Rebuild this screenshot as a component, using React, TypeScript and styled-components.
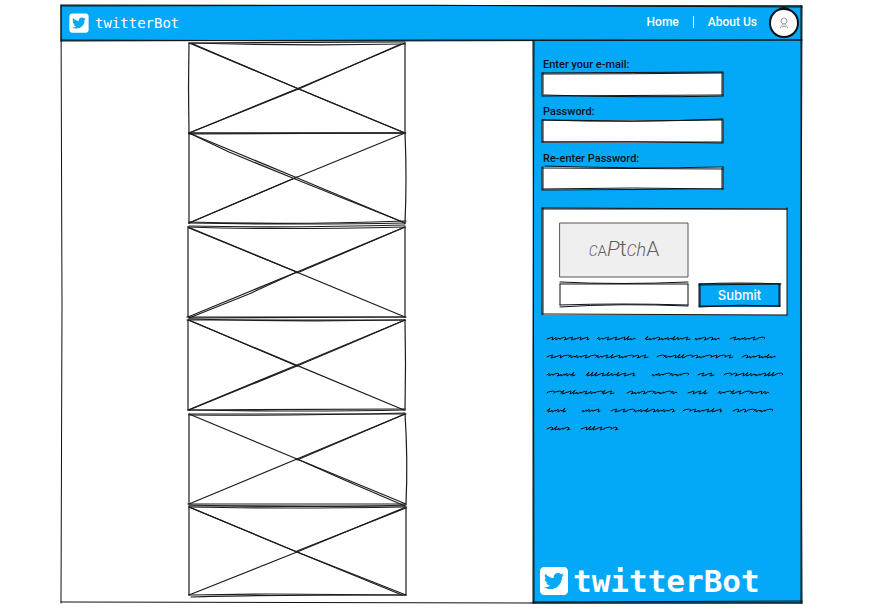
import React, { useId } from "react";
import styled, { createGlobalStyle } from "styled-components";
import { FaSquareTwitter } from "react-icons/fa6";

const BLUE = "#03a9f7";
const INK = "#0b1218";

const GlobalStyle = createGlobalStyle`
  *, *::before, *::after { box-sizing: border-box; }
  body { margin: 0; background: #fff; font-family: Roboto, "Liberation Sans", sans-serif; color: ${INK}; }
`;

/* ---------- hand-drawn outlines ---------- */

const Ink = styled.svg<{ $weight?: number; $color?: string }>`
  position: absolute;
  inset: 0;
  width: 100%;
  height: 100%;
  overflow: visible;
  pointer-events: none;
  fill: none;
  stroke: ${(p) => p.$color ?? INK};
  stroke-width: ${(p) => p.$weight ?? 1};
  stroke-linecap: round;

  path { vector-effect: non-scaling-stroke; }
`;

type SketchProps = { w: number; h: number; lines: string[]; weight?: number; color?: string };

function Sketch({ w, h, lines, weight, color }: SketchProps) {
  return (
    <Ink viewBox={`0 0 ${w} ${h}`} preserveAspectRatio="none" $weight={weight} $color={color} aria-hidden="true">
      {lines.map((d) => (
        <path key={d} d={d} />
      ))}
    </Ink>
  );
}

/* ---------- page frame ---------- */

const Page = styled.div`
  padding: 5px 87px 10px 61px;
`;

const Frame = styled.div`
  position: relative;
  display: flex;
  flex-direction: column;
  min-height: 598px;
`;

const Header = styled.header`
  position: relative;
  display: flex;
  align-items: center;
  justify-content: space-between;
  height: 36px;
  padding: 0 4px 0 8px;
  background: ${BLUE};
`;

const Body = styled.div`
  flex: 1;
  display: grid;
  grid-template-columns: minmax(0, 1fr) 269px;
`;

const Brand = styled.a<{ $large?: boolean }>`
  display: flex;
  align-items: center;
  gap: ${(p) => (p.$large ? 5 : 6)}px;
  color: #fff;
  text-decoration: none;
  font-family: "DejaVu Sans Mono", "Liberation Mono", monospace;
  font-size: ${(p) => (p.$large ? 31 : 14)}px;
  font-weight: ${(p) => (p.$large ? 700 : 400)};
  line-height: ${(p) => (p.$large ? 32 : 20)}px;

  svg {
    flex: none;
    width: ${(p) => (p.$large ? 28 : 20)}px;
    height: ${(p) => (p.$large ? 32 : 22)}px;
  }
`;

const Nav = styled.nav`
  display: flex;
  align-items: center;
  gap: 13px;
  color: #fff;
  font-size: 12px;
  font-weight: 500;
  line-height: 20px;
`;

const NavLink = styled.a`
  padding-bottom: 3px;
  color: inherit;
  text-decoration: none;
`;

const Divider = styled.span`
  width: 1px;
  height: 12px;
  margin: 0 1px 3px;
  background: #fff;
`;

const Avatar = styled.button`
  position: relative;
  display: grid;
  place-items: center;
  width: 28px;
  height: 28px;
  padding: 0;
  border: 0;
  border-radius: 50%;
  background: #fff;
`;

const Person = styled.svg`
  width: 10px;
  height: 12px;
  fill: none;
  stroke: #a0a0a0;
  stroke-width: 1;
`;

/* ---------- picture placeholders ---------- */

const Gallery = styled.main`
  display: flex;
  flex-direction: column;
  align-items: center;
  justify-content: space-between;
  padding: 2px 0 6px;
`;

const Pair = styled.div`
  display: flex;
  flex-direction: column;
  align-items: center;
  width: 100%;
`;

const Placeholder = styled.div`
  position: relative;
  width: 216px;
  max-width: 100%;
  height: 90px;
`;

const PLACEHOLDERS: string[][] = [
  [
    "M0 0Q110 3 216 1", "M3 0L216 -1", "M0 0Q-1 45 0 90", "M216 0V90", "M0 90H216",
    "M0 0L110 46L216 90", "M2 0Q108 46 216 90", "M0 90L110 45L216 0", "M0 90L112 45L212 1",
  ],
  [
    "M0 0H216", "M0 1L216 0", "M0 0V90", "M216 0Q218 45 216 90", "M0 90Q120 92 216 90", "M0 89Q100 92 217 88",
    "M0 0L106 44L216 90", "M0 0L40 19L106 46L216 90", "M0 90L106 45L216 0", "M0 90L108 44",
  ],
  [
    "M-1 0Q80 3 216 0", "M0 -1Q100 1 216 -2", "M-1 0V90", "M216 0V90", "M-2 90H216", "M0 91L217 90",
    "M-1 0L216 90", "M0 1L108 45", "M-1 90L108 45L216 0", "M0 91L60 67L108 45", "M108 46L216 0",
  ],
  [
    "M-2 0H216", "M0 -1Q100 2 216 0", "M-1 0V90", "M216 0Q217 45 216 90", "M-1 90L216 89", "M0 90Q120 92 216 90",
    "M-1 0L215 90", "M0 0L108 46", "M-1 90L108 45L216 0", "M0 90L108 46L160 24L216 0",
  ],
  [
    "M0 0H217", "M0 1Q100 2 216 -1", "M0 0V90", "M216 0Q219 45 217 90", "M-1 90H217", "M0 91Q130 94 217 91",
    "M0 0L108 45L217 90", "M108 45L160 68L216 92", "M0 90L216 0", "M108 46L216 0",
  ],
  [
    "M0 0Q90 2 217 0", "M0 -1H216", "M0 0V88", "M217 0V88", "M0 88L80 87L217 88", "M2 90Q60 88 216 88",
    "M0 0L108 45L217 88", "M0 0L108 45L213 88", "M0 88L108 45L217 0", "M108 44L217 1",
  ],
];

/* ---------- sign-up panel ---------- */

const Panel = styled.aside`
  position: relative;
  display: flex;
  flex-direction: column;
  padding: 16px 15px 6px 9px;
  background: ${BLUE};
`;

const Form = styled.form`
  display: flex;
  flex-direction: column;
  gap: 8px;
`;

const Field = styled.div`
  display: flex;
  flex-direction: column;
  width: 181px;
`;

const Label = styled.label`
  padding-left: 1px;
  font-size: 11px;
  font-weight: 500;
  line-height: 16px;
`;

const InputBox = styled.div`
  position: relative;
  height: 23px;
  background: #fff;
`;

const Input = styled.input`
  display: block;
  width: 100%;
  height: 100%;
  padding: 0 6px;
  border: 0;
  outline: 0;
  background: transparent;
  font: inherit;
  font-size: 12px;
`;

const CaptchaCard = styled.div`
  position: relative;
  display: grid;
  grid-template-columns: 128px 81px;
  column-gap: 11px;
  row-gap: 6px;
  margin-top: 10px;
  padding: 15px 7px 8px 18px;
  background: #fff;
`;

const CaptchaPicture = styled.div`
  grid-column: 1;
  position: relative;
  display: flex;
  align-items: baseline;
  justify-content: center;
  height: 54px;
  background: #efefef;
  color: #5f5f5f;
  font-family: Roboto, sans-serif;
  font-weight: 300;
  line-height: 52px;
`;

const Letter = styled.span<{ $size: number; $slant?: boolean }>`
  font-size: ${(p) => p.$size}px;
  font-style: ${(p) => (p.$slant ? "italic" : "normal")};
`;

const LETTERS: [string, number, boolean][] = [
  ["C", 14, true], ["A", 15, false], ["P", 21, true], ["t", 22, false],
  ["C", 16, true], ["h", 18, true], ["A", 21, false],
];

const CaptchaAnswer = styled(InputBox)`
  grid-column: 1;
`;

const Submit = styled.button`
  position: relative;
  grid-column: 2;
  height: 24px;
  padding: 0;
  border: 0;
  background: ${BLUE};
  color: #fff;
  font-family: Inter, sans-serif;
  font-size: 13px;
  font-weight: 500;
  line-height: 24px;
`;

const Scribbles = styled.svg`
  width: 240px;
  height: 108px;
  margin: 14px 0 0 5px;
  overflow: visible;
  fill: none;
  stroke: ${INK};
  stroke-width: 1;
  stroke-linecap: round;
  stroke-linejoin: round;
`;

const Footer = styled.footer`
  margin: auto 0 0 -2px;
`;

/* Each row lists the [start, end] of its scribbled words. */
const WORDS: [number, number][][] = [
  [[0, 41], [50, 90], [98, 140], [148, 175], [183, 220]],
  [[0, 102], [110, 187], [195, 228]],
  [[0, 31], [39, 92], [105, 143], [151, 170], [177, 233]],
  [[0, 67], [80, 132], [141, 163], [171, 225]],
  [[0, 22], [35, 56], [64, 128], [136, 178], [186, 224]],
  [[0, 27], [34, 75]],
];

/* Scribbled letters: each stroke with the width that it advances by. */
const STROKES: [string, number][] = [
  ["l3 -1l3 -1l-1 3l2 -1", 7],
  ["l1 -1l5 -1l2 1l-1 1", 7],
  ["l1 -1l0 2l4 -2l0 1", 5],
  ["l2 -2l0 3l3 -2l1 1", 6],
  ["l2 -1l3 -1l1 1l-2 2l3 -1", 7],
  ["l2 -1l4 -1l-2 3l4 -1", 8],
  ["l3 -3l-2 4l3 -1", 4],
];

function wordPath(x: number, end: number, y: number, seed: number) {
  let d = "";
  let at = x;
  let n = seed;
  while (at < end - 4) {
    const [stroke, advance] = STROKES[n % STROKES.length];
    d += `M${at} ${y}${stroke}`;
    n = (n * 5 + 3 + at) % 101;
    at += advance;
  }
  return d;
}

function TextField({ label, type, lines }: { label: string; type: string; lines: string[] }) {
  const id = useId();
  return (
    <Field>
      <Label htmlFor={id}>{label}</Label>
      <InputBox>
        <Input id={id} type={type} />
        <Sketch w={181} h={23} lines={lines} />
      </InputBox>
    </Field>
  );
}

function Logo({ large }: { large?: boolean }) {
  return (
    <Brand href="#" $large={large}>
      <FaSquareTwitter aria-hidden="true" />
      twitterBot
    </Brand>
  );
}

function Picture({ lines }: { lines: string[] }) {
  return (
    <Placeholder role="img" aria-label="Picture placeholder">
      <Sketch w={216} h={90} weight={1.2} color="#1c1c1c" lines={lines} />
    </Placeholder>
  );
}

export default function App() {
  return (
    <>
      <GlobalStyle />
      <Page>
        <Frame>
          <Header>
            <Logo />
            <Nav>
              <NavLink href="#">Home</NavLink>
              <Divider />
              <NavLink href="#">About Us</NavLink>
              <Avatar type="button" aria-label="Account">
                <Person viewBox="0 0 10 12">
                  <circle cx="5" cy="4" r="3" />
                  <path d="M1 11L4 7M9 11L6 7M3 10Q5 8 7 10" />
                </Person>
                <Sketch
                  w={28}
                  h={28}
                  weight={2}
                  lines={["M14 0C22 0 28 6 28 14S22 28 14 28S0 22 0 14S6 0 13 0", "M10 0Q14 -2 18 0"]}
                />
              </Avatar>
            </Nav>
            <Sketch w={741} h={36} lines={["M0 35L300 36L741 35", "M0 36L380 35L741 35"]} />
          </Header>

          <Body>
            <Gallery>
              <Pair>
                <Picture lines={PLACEHOLDERS[0]} />
                <Picture lines={PLACEHOLDERS[1]} />
              </Pair>
              {PLACEHOLDERS.slice(2).map((lines, i) => (
                <Picture key={i} lines={lines} />
              ))}
            </Gallery>

            <Panel>
              <Form onSubmit={(e) => e.preventDefault()}>
                <TextField
                  label="Enter your e-mail:"
                  type="email"
                  lines={["M0 0L181 -1", "M0 1Q90 1 181 0", "M1 0V23", "M0 0V22", "M181 0V23", "M180 0V22", "M0 23L181 22", "M2 22Q100 25 181 23"]}
                />
                <TextField
                  label="Password:"
                  type="password"
                  lines={["M0 0Q90 3 181 -1", "M0 0Q90 2 180 0", "M0 0V22", "M1 0V22", "M180 0V22", "M181 0V22", "M0 22Q90 21 181 23", "M0 22L181 22"]}
                />
                <TextField
                  label="Re-enter Password:"
                  type="password"
                  lines={["M3 -1Q90 2 181 0", "M0 1L181 2", "M0 0V22", "M1 0V22", "M181 0V22", "M180 1V22", "M0 22Q90 20 181 22", "M0 23L181 22"]}
                />

                <CaptchaCard>
                  <CaptchaPicture role="img" aria-label="Captcha">
                    {LETTERS.map(([letter, size, slant], i) => (
                      <Letter key={i} $size={size} $slant={slant}>
                        {letter}
                      </Letter>
                    ))}
                    <Sketch w={128} h={54} color="#555" lines={["M0 0H128V54H0Z"]} />
                  </CaptchaPicture>
                  <CaptchaAnswer>
                    <Input aria-label="Captcha text" />
                    <Sketch
                      w={128}
                      h={23}
                      lines={["M0 -1Q60 2 128 -1", "M0 1H128", "M0 1V22", "M128 1V22", "M0 22Q60 20 128 22", "M0 24Q60 20 128 23"]}
                    />
                  </CaptchaAnswer>
                  <Submit type="submit">
                    Submit
                    <Sketch
                      w={81}
                      h={24}
                      lines={["M0 1Q40 -1 82 1", "M0 2L81 1", "M0 1V23", "M1 1V23", "M81 1V23", "M80 1V23", "M0 23H81", "M0 24Q40 21 81 23"]}
                    />
                  </Submit>
                  <Sketch w={245} h={107} lines={["M0 0L245 1", "M0 1H245", "M0 0V107", "M1 0V106", "M245 0V107", "M0 106L245 107"]} />
                </CaptchaCard>
              </Form>

              <Scribbles viewBox="0 0 240 108" aria-hidden="true">
                {WORDS.map((row, r) =>
                  row.map(([start, end], i) => (
                    <path key={`${r}-${i}`} d={wordPath(start, end, 10 + r * 18, r * 5 + i * 3)} />
                  ))
                )}
              </Scribbles>

              <Footer>
                <Logo large />
              </Footer>
              <Sketch w={269} h={562} lines={["M0 0L1 562", "M1 0L0 300L0 562", "M0 561L269 560", "M0 562L269 562"]} />
            </Panel>
          </Body>

          <Sketch
            w={741}
            h={598}
            lines={["M0 0L741 1", "M0 1Q370 -1 741 2", "M0 0L1 300L0 598", "M0 1V36", "M741 1L740 300L741 598", "M740 1V598", "M0 597L470 598", "M470 598L741 598"]}
          />
        </Frame>
      </Page>
    </>
  );
}
